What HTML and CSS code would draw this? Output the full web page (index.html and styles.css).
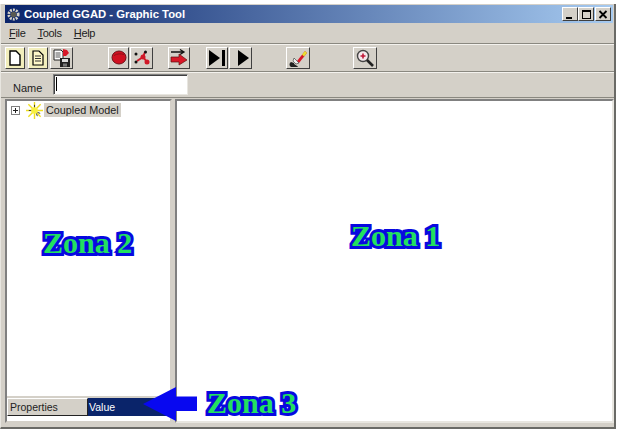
FILE: index.html
```html
<!DOCTYPE html>
<html>
<head>
    <meta charset="utf-8">
    <title>Coupled GGAD - Graphic Tool</title>
    <link rel="stylesheet" href="styles.css">
</head>
<body>
<div class="window">
    <div class="titlebar">
        <svg class="appicon" width="15" height="15" viewBox="0 0 16 16">
            <circle cx="8" cy="8" r="5" fill="none" stroke="#d8d4c8" stroke-width="3" stroke-dasharray="2 1.2"/>
            <circle cx="8" cy="8" r="3" fill="#5a5a50"/>
        </svg>
        <span class="title">Coupled GGAD - Graphic Tool</span>
        <div class="winbtns">
            <div class="winbtn"><svg width="12" height="11" viewBox="0 0 12 11"><rect x="2" y="8" width="6" height="2" fill="#000"/></svg></div>
            <div class="winbtn"><svg width="12" height="11" viewBox="0 0 12 11"><path d="M2 1h9v9h-9z M3 3v6h7v-6z" fill="#000" fill-rule="evenodd"/></svg></div>
            <div class="winbtn closebtn"><svg width="12" height="11" viewBox="0 0 12 11"><path d="M2.500 2l7 7M9.500 2l-7 7" stroke="#000" stroke-width="1.800"/></svg></div>
        </div>
    </div>

    <div class="menubar">
        <span class="menu"><u>F</u>ile</span>
        <span class="menu"><u>T</u>ools</span>
        <span class="menu"><u>H</u>elp</span>
    </div>

    <div class="toolbar">
        <div class="tool hl tool-new"><svg width="14" height="16" viewBox="0 0 14 16"><path d="M2 1h6l4 4v10h-10z" fill="#fff" stroke="#000" stroke-width="1.400"/></svg></div>
        <div class="tool hl tool-open"><svg width="14" height="16" viewBox="0 0 14 16"><path d="M2 1h6l4 4v10h-10z" fill="#fff8c8" stroke="#000" stroke-width="1.200"/><path d="M4 6h6M4 8.500h6M4 11h6" stroke="#333"/></svg></div>
        <div class="tool tool-save"><svg width="20" height="20" viewBox="0 0 20 20"><path d="M2 2h7l2 2v8h-9z" fill="#fff" stroke="#222"/><path d="M3.500 5h5M3.500 7h5M3.500 9h5" stroke="#555"/><path d="M11 1l4 1 2 3-3 3h-3z" fill="#d81828"/><rect x="8" y="10" width="10" height="9" fill="#222"/><rect x="10" y="11" width="6" height="3" fill="#ddd"/><rect x="11" y="15.500" width="4" height="3" fill="#777"/></svg></div>
        <div class="tool tool-atomic"><svg width="16" height="15" viewBox="0 0 16 15"><ellipse cx="8" cy="7.500" rx="7" ry="6.500" fill="#d01020" stroke="#701018"/><path d="M3 5.500c3-2 7-2 10-1" stroke="#901018" fill="none"/></svg></div>
        <div class="tool tool-coupled"><svg width="20" height="20" viewBox="0 0 20 20"><path d="M5 13l6-4 4 5M11 9l2-5" stroke="#d01828" stroke-width="2" fill="none"/><circle cx="11" cy="9" r="2.500" fill="#d01828"/><circle cx="15" cy="14" r="2.500" fill="#d01828"/><circle cx="13.500" cy="4" r="1.500" fill="#111"/><circle cx="4" cy="6" r="1.500" fill="#111"/><circle cx="4" cy="14" r="1.500" fill="#111"/></svg></div>
        <div class="tool tool-link"><svg width="20" height="20" viewBox="0 0 20 20"><path d="M2 4h12M11 1.500l4 2.500-4 2.500" stroke="#111" stroke-width="1.300" fill="none"/><path d="M2 9h8v-3l8 6-8 5v-3h-8z" fill="#d81828" stroke="#601010" stroke-width=".7"/></svg></div>
        <div class="tool tool-step"><svg width="18" height="16" viewBox="0 0 18 16"><path d="M1 0l11 8-11 8z" fill="#000"/><rect x="14" y="0" width="3" height="16" fill="#000"/></svg></div>
        <div class="tool tool-play"><svg width="21" height="16" viewBox="0 0 21 16"><path d="M8 0l11 8-11 8z" fill="#000"/></svg></div>
        <div class="tool tool-clean"><svg width="20" height="20" viewBox="0 0 20 20"><path d="M9 13l8-10 2 2-8 10z" fill="#d81828"/><path d="M14 6.500l3-3.500 2 2-3 3.500z" fill="#e8e030"/><path d="M6 10l5 5-3 1-3-3z" fill="#eee" stroke="#333" stroke-width=".6"/><path d="M3 14c-2 1-2 4 0 5h7c-1-2-4-2-4-4z" fill="#222"/></svg></div>
        <div class="tool tool-zoom"><svg width="20" height="20" viewBox="0 0 20 20"><circle cx="8" cy="8" r="5.500" fill="#f4e8ec" stroke="#444" stroke-width="1.400"/><path d="M5.500 8h5M8 5.500v5" stroke="#c01838" stroke-width="1.600"/><path d="M12 12l6 6" stroke="#222" stroke-width="2.600"/></svg></div>
    </div>

    <div class="namebar">
        <label class="namelabel">Name</label>
        <div class="nameinput"><span class="caret"></span></div>
    </div>

    <div class="main">
        <div class="leftpanel">
            <div class="tree">
                <div class="treerow">
                    <span class="expander"></span>
                    <svg class="sun" width="17" height="17" viewBox="0 0 18 18">
                        <path d="M9 0v18M0 9h18M2.500 2.500l13 13M15.500 2.500l-13 13" stroke="#f0e020" stroke-width="1.500"/>
                        <path d="M9 3v3M3 9h3M12 15l-1-3M15 12l-3-1" stroke="#333" stroke-width="1"/>
                        <circle cx="9" cy="9" r="3.500" fill="#f8f040"/>
                    </svg>
                    <span class="treelabel">Coupled Model</span>
                </div>
            </div>
            <div class="props">
                <div class="propname">Properties</div>
                <div class="propvalue">Value</div>
            </div>
        </div>
        <div class="canvas"></div>
    </div>

    <div class="zona zona1">Zona 1</div>
    <div class="zona zona2">Zona 2</div>
    <div class="zona zona3">Zona 3</div>
    <svg class="arrow" width="56" height="34" viewBox="0 0 56 34">
        <path d="M0 17L33 0v9.500h21v14.500h-21v10z" fill="#0808f0"/>
    </svg>
</div>
</body>
</html>
```

FILE: styles.css
```css
* {
    margin: 0;
    padding: 0;
    box-sizing: border-box;
}
body {
    font-family: "Liberation Sans", Arial, sans-serif;
    background: #fff;
    width: 618px;
    height: 431px;
    overflow: hidden;
}
.window {
    position: relative;
    width: 616px;
    height: 425px;
    margin-top: 4px;
    background: #d4d0c8;
    border-right: 2px solid #6a6a66;
    border-bottom: 2px solid #6a6a66;
    border-left: 1px solid #e8e6e0;
    display: flex;
    flex-direction: column;
}

/* title */
.titlebar {
    height: 18px;
    margin: 1px 1px 0 4px;
    background: linear-gradient(to right, #0a246a, #a6caf0);
    display: flex;
    align-items: center;
    padding-left: 1px;
}
.appicon {
    margin-right: 3px;
}
.title {
    color: #fff;
    font-size: 11.300px;
    font-weight: bold;
}
.winbtns {
    margin-left: auto;
    margin-right: 2px;
    display: flex;
}
.winbtn {
    width: 16px;
    height: 14px;
    background: #d4d0c8;
    border: 1px solid;
    border-color: #fff #404040 #404040 #fff;
    display: flex;
    align-items: center;
    justify-content: center;
}
.closebtn {
    margin-left: 1px;
}

/* menu */
.menubar {
    height: 20px;
    display: flex;
    align-items: center;
    padding-left: 8px;
    gap: 12px;
    font-size: 11px;
    letter-spacing: -.3px;
    color: #222;
}
.toolbar {
    height: 29px;
    border-top: 1px solid #8a8880;
    border-bottom: 1px solid #8a8880;
    box-shadow: inset 0 1px 0 #f4f2ee, 0 1px 0 #f4f2ee;
    display: flex;
    align-items: center;
    padding-left: 4px;
}
.tool {
    height: 22px;
    flex: none;
    border: 1px solid;
    border-color: #fff #404040 #404040 #fff;
    display: flex;
    align-items: center;
    justify-content: center;
    overflow: hidden;
}
.hl {
    background: #f2eebc;
}
.tool-new { width: 20px; margin-right: 3px; }
.tool-open { width: 20px; margin-right: 2px; }
.tool-save { width: 23px; margin-right: 35px; }
.tool-atomic { width: 21px; margin-right: 1px; }
.tool-coupled { width: 23px; margin-right: 15px; }
.tool-link { width: 22px; margin-right: 16px; }
.tool-step { width: 22px; margin-right: 1px; }
.tool-play { width: 23px; margin-right: 34px; }
.tool-clean { width: 24px; margin-right: 43px; }
.tool-zoom { width: 24px; }

/* name */
.namebar {
    height: 26px;
    display: flex;
    align-items: flex-start;
    padding: 2px 0 0 12px;
    border-bottom: 1px solid #8a8880;
}
.namelabel {
    font-size: 11px;
    color: #222;
    margin: 8px 11px 0 0;
}
.nameinput {
    width: 135px;
    height: 21px;
    background: #fff;
    border: 1px solid;
    border-color: #808080 #e8e6e0 #e8e6e0 #808080;
    box-shadow: inset 1px 1px 0 #404040;
    padding: 2px 0 0 2px;
}
.caret {
    display: block;
    width: 1px;
    height: 14px;
    background: #000;
}

/* panels */
.main {
    flex: 1;
    display: flex;
    padding: 1px 0 4px 4px;
    gap: 3px;
    min-height: 0;
}
.leftpanel {
    width: 167px;
    flex: none;
    background: #fff;
    border: 2px solid;
    border-color: #808080 #d4d0c8 #d4d0c8 #808080;
    display: flex;
    flex-direction: column;
}
.tree {
    flex: 1;
    padding: 0 0 0 4px;
}
.treerow {
    display: flex;
    align-items: center;
    height: 18px;
}
.expander {
    width: 9px;
    height: 9px;
    border: 1px solid #808080;
    margin-right: 6px;
    background: linear-gradient(#222, #222) center / 5px 1px no-repeat, linear-gradient(#222, #222) center / 1px 5px no-repeat;
}
.sun {
    margin-right: 1px;
}
.treelabel {
    background: #d4d0c8;
    font-size: 10.800px;
    color: #222;
    padding: 1px 2px;
}
.props {
    height: 20px;
    margin-bottom: 5px;
    display: flex;
    font-size: 10.500px;
    border-top: 2px solid #d4d0c8;
}
.propname {
    width: 81px;
    background: #d4d0c8;
    border: 1px solid;
    border-color: #fff #222 #222 #fff;
    padding: 2px 0 0 2px;
    color: #222;
}
.propvalue {
    flex: 1;
    background: #0a246a;
    color: #fff;
    padding: 3px 0 0 1px;
}
.canvas {
    flex: 1;
    background: #fff;
    border: 2px solid;
    border-color: #808080 #e8e6e0 #e8e6e0 #808080;
}

/* labels painted over the window */
.zona {
    position: absolute;
    font-family: "Liberation Serif", serif;
    font-weight: bold;
    font-size: 30px;
    line-height: 36px;
    color: #22e060;
    -webkit-text-stroke: 6px #0808e0;
    paint-order: stroke fill;
    white-space: nowrap;
}
.zona1 { left: 350px; top: 214px; }
.zona2 { left: 42px; top: 221px; }
.zona3 { left: 206px; top: 381px; }
.arrow {
    position: absolute;
    left: 142px;
    top: 383px;
}
```
